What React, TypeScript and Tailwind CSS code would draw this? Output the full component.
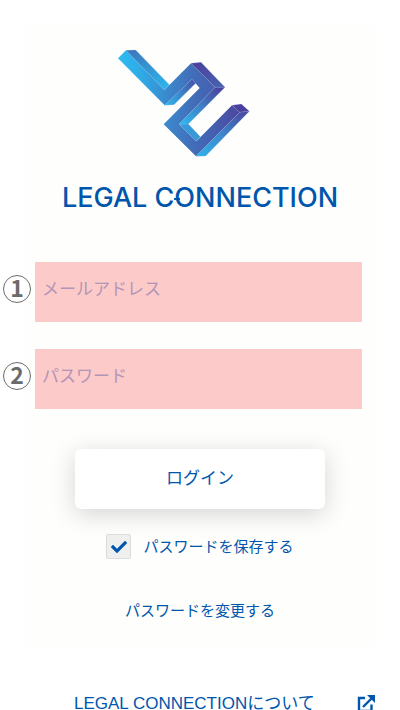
import type { ReactNode } from "react";
import { FaCheck } from "react-icons/fa";

const SANS = "font-['Liberation_Sans','Noto_Sans_CJK_JP',sans-serif]";

export default function App() {
  return (
    <div className={`min-h-screen bg-white text-[#0056ac] ${SANS}`}>
      <main className="mx-[25px] pt-[25px]">
        <section className="rounded-lg bg-[#fefefc] pt-6 pb-6">
          <Brand />
          <form className="mt-12" onSubmit={(e) => e.preventDefault()}>
            <div className="flex flex-col gap-[27px] pr-[13px] pl-[10px]">
              <Field id="email" type="email" label="メールアドレス" step="1" />
              <Field id="password" type="password" label="パスワード" step="2" />
            </div>
            <div className="mt-10 px-[50px]">
              <button
                type="submit"
                className="h-15 w-full cursor-pointer rounded-md bg-white text-[17px] shadow-[0_5px_25px_rgba(0,0,0,0.17)]"
              >
                ログイン
              </button>
            </div>
            <label className="mt-[25px] flex items-center justify-center gap-3 text-[15px] leading-6">
              <span className="relative flex size-[25px]">
                <input
                  type="checkbox"
                  defaultChecked
                  className="peer size-full appearance-none rounded-xs border border-[#dcdcdc] bg-[#efefef]"
                />
                <FaCheck
                  className="pointer-events-none absolute inset-0 m-auto hidden size-4 peer-checked:block"
                  aria-hidden
                />
              </span>
              パスワードを保存する
            </label>
          </form>
          <p className="mt-10 text-center text-[15px] leading-6">
            <a href="#change-password">パスワードを変更する</a>
          </p>
        </section>
        <footer className="mt-[45px]">
          <a href="#about" className="flex items-center pl-[49px] text-[17px] leading-6">
            <span className="flex-1 whitespace-nowrap">LEGAL CONNECTIONについて</span>
            <ExternalIcon />
          </a>
        </footer>
      </main>
    </div>
  );
}

function Brand() {
  return (
    <h1 className="flex flex-col items-center">
      <span className="pr-8">
        <LogoMark />
      </span>
      <span className="mt-6 font-[Inter,sans-serif] text-[27px] leading-8 font-medium whitespace-nowrap">
        LEGAL C<Joint>O</Joint>NNECTION
      </span>
    </h1>
  );
}

/** Letter with the short bar that ties it to the one before. */
function Joint({ children }: { children: ReactNode }) {
  return (
    <span className="relative">
      {children}
      <span className="absolute top-1/2 left-0 h-0.5 w-1.5 bg-current" />
    </span>
  );
}

type FieldProps = { id: string; type: string; label: string; step: string };

function Field({ id, type, label, step }: FieldProps) {
  return (
    <div className="relative">
      <span className="absolute top-[13px] -left-8 flex size-7 items-center justify-center rounded-full border border-[#6b6b6b] pb-1 font-['Noto_Sans_CJK_JP',sans-serif] text-[23px] leading-none font-bold text-[#6b6b6b]">
        {step}
      </span>
      <input
        id={id}
        type={type}
        placeholder=" "
        className="peer block h-15 w-full bg-[#fdcaca] px-[7px] pb-1 text-[17px] outline-none"
      />
      <label
        htmlFor={id}
        className="pointer-events-none absolute top-4 left-[7px] hidden text-[17px] leading-6 text-[#b395b5] peer-placeholder-shown:block"
      >
        {label}
      </label>
    </div>
  );
}

function LogoMark() {
  return (
    <svg className="block" width="134" height="109" viewBox="36 27 402 327" aria-hidden>
      <defs>
        <linearGradient id="face" gradientUnits="userSpaceOnUse" x1="40" y1="0" x2="420" y2="0">
          <stop offset="0" stopColor="#2dbcf2" />
          <stop offset="0.2" stopColor="#2fa8e4" />
          <stop offset="0.4" stopColor="#3c86cb" />
          <stop offset="0.6" stopColor="#426cb8" />
          <stop offset="0.75" stopColor="#4560b0" />
          <stop offset="1" stopColor="#4e409b" />
        </linearGradient>
        <linearGradient id="top" gradientUnits="userSpaceOnUse" x1="75" y1="35" x2="190" y2="150">
          <stop offset="0" stopColor="#3b78bd" />
          <stop offset="1" stopColor="#2cb8ee" />
        </linearGradient>
        <linearGradient id="under" gradientUnits="userSpaceOnUse" x1="190" y1="196" x2="275" y2="120">
          <stop offset="0" stopColor="#31b1e9" />
          <stop offset="1" stopColor="#484da4" />
        </linearGradient>
        <linearGradient id="side" gradientUnits="userSpaceOnUse" x1="235" y1="252" x2="350" y2="145">
          <stop offset="0" stopColor="#2db6ec" />
          <stop offset="0.5" stopColor="#417cc3" />
          <stop offset="1" stopColor="#4b409b" />
        </linearGradient>
        <linearGradient id="crown" gradientUnits="userSpaceOnUse" x1="345" y1="145" x2="265" y2="75">
          <stop offset="0" stopColor="#4763b2" />
          <stop offset="1" stopColor="#4b409b" />
        </linearGradient>
        <linearGradient id="edge" gradientUnits="userSpaceOnUse" x1="285" y1="345" x2="430" y2="215">
          <stop offset="0" stopColor="#2fb0e8" />
          <stop offset="0.45" stopColor="#3d88cd" />
          <stop offset="1" stopColor="#4b439c" />
        </linearGradient>
      </defs>
      <path
        d="M39 55 63 31 178 150 258 70 330 142 222 253 274 304 381 196 404 217 273 349 176 253 284 144 261 118 179 196Z"
        fill="url(#face)"
      />
      <g stroke="#8db4e0" strokeWidth="1" strokeOpacity="0.6" strokeLinejoin="round">
        <path d="M63 31 92 30 193 134 178 150Z" fill="url(#top)" />
        <path d="M179 196 261 118 272 130 207 194Z" fill="url(#under)" />
        <path d="M258 70 288 67 360 142 330 142Z" fill="url(#crown)" />
        <path d="M330 142 360 142 250 252 222 253Z" fill="url(#side)" />
        <path d="M222 253 250 252 286 290 274 304Z" fill="#3799d8" />
        <path d="M381 196 409 192 433 214 404 217Z" fill="#4a409b" />
        <path d="M404 217 433 214 302 348 273 349Z" fill="url(#edge)" />
      </g>
    </svg>
  );
}

function ExternalIcon() {
  return (
    <svg width="18" height="18" viewBox="0 0 18 18" fill="none" stroke="currentColor" strokeWidth="2.4" aria-hidden>
      <path d="M8 3H2v13h12.500V9.500" />
      <path d="M6 12 15 3" />
      <path d="M10 0h8v8Z" fill="currentColor" stroke="none" />
    </svg>
  );
}
